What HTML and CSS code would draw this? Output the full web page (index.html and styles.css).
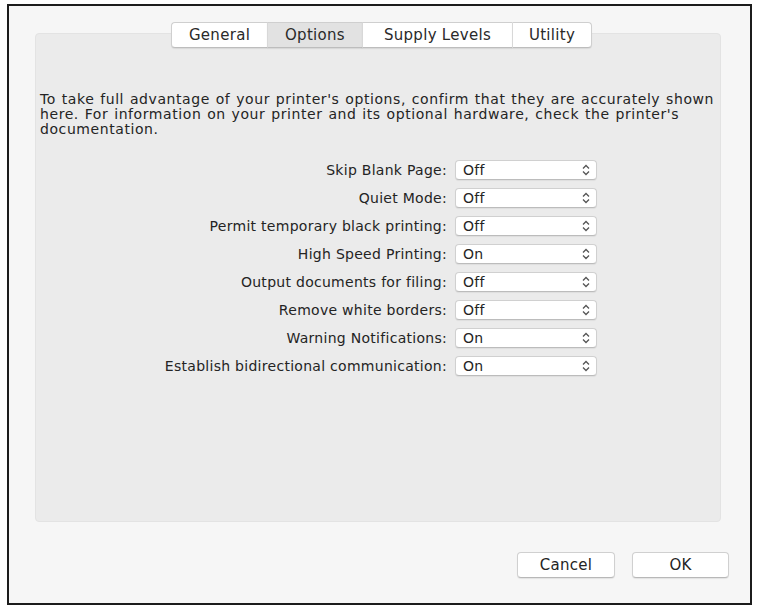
FILE: index.html
```html
<!DOCTYPE html>
<html lang="en">

<head>
    <meta charset="UTF-8">
    <title>Printer Options</title>
    <link rel="stylesheet" href="styles.css">
</head>

<body>
    <div class="window">
        <div class="tabs">
            <span class="tab tab-general">General</span>
            <span class="tab tab-options active">Options</span>
            <span class="tab tab-supply">Supply Levels</span>
            <span class="tab tab-utility">Utility</span>
        </div>

        <div class="panel">
            <p class="intro">To take full advantage of your printer's options, confirm that they are accurately shown<br>
                here. For information on your printer and its optional hardware, check the printer's<br>
                documentation.</p>

            <div class="form">
                <label>Skip Blank Page:</label>
                <div class="select"><span>Off</span><svg width="8" height="12" viewBox="0 0 8 12"><path d="M1 4.5 4 1.5 7 4.5M1 7.5 4 10.5 7 7.5" /></svg></div>

                <label>Quiet Mode:</label>
                <div class="select"><span>Off</span><svg width="8" height="12" viewBox="0 0 8 12"><path d="M1 4.5 4 1.5 7 4.5M1 7.5 4 10.5 7 7.5" /></svg></div>

                <label>Permit temporary black printing:</label>
                <div class="select"><span>Off</span><svg width="8" height="12" viewBox="0 0 8 12"><path d="M1 4.5 4 1.5 7 4.5M1 7.5 4 10.5 7 7.5" /></svg></div>

                <label>High Speed Printing:</label>
                <div class="select"><span>On</span><svg width="8" height="12" viewBox="0 0 8 12"><path d="M1 4.5 4 1.5 7 4.5M1 7.5 4 10.5 7 7.5" /></svg></div>

                <label>Output documents for filing:</label>
                <div class="select"><span>Off</span><svg width="8" height="12" viewBox="0 0 8 12"><path d="M1 4.5 4 1.5 7 4.5M1 7.5 4 10.5 7 7.5" /></svg></div>

                <label>Remove white borders:</label>
                <div class="select"><span>Off</span><svg width="8" height="12" viewBox="0 0 8 12"><path d="M1 4.5 4 1.5 7 4.5M1 7.5 4 10.5 7 7.5" /></svg></div>

                <label>Warning Notifications:</label>
                <div class="select"><span>On</span><svg width="8" height="12" viewBox="0 0 8 12"><path d="M1 4.5 4 1.5 7 4.5M1 7.5 4 10.5 7 7.5" /></svg></div>

                <label>Establish bidirectional communication:</label>
                <div class="select"><span>On</span><svg width="8" height="12" viewBox="0 0 8 12"><path d="M1 4.5 4 1.5 7 4.5M1 7.5 4 10.5 7 7.5" /></svg></div>
            </div>
        </div>

        <div class="buttons">
            <button class="btn btn-cancel">Cancel</button>
            <button class="btn btn-ok">OK</button>
        </div>
    </div>
</body>

</html>
```

FILE: styles.css
```css
* {
    padding: 0;
    margin: 0;
    box-sizing: border-box;
}

body {
    background: #fff;
    font-family: "DejaVu Sans", "Liberation Sans", sans-serif;
    color: #242424;
}

.window {
    width: 745px;
    height: 601px;
    margin: 4px 0 0 7px;
    border: 2px solid #1c1c1c;
    background: #f6f6f6;
    padding-top: 16px;
    display: flex;
    flex-direction: column;
}

/* tab strip sits half over the panel */
.tabs {
    display: flex;
    justify-content: center;
    height: 26px;
    margin: 0 0 -15px 4px;
    position: relative;
    z-index: 1;
}

.tab {
    display: flex;
    align-items: center;
    justify-content: center;
    height: 26px;
    font-size: 15px;
    letter-spacing: 0.3px;
    color: #2a2a2a;
    background: #fff;
    border-top: 1px solid #cfcfcf;
    border-bottom: 1px solid #bdbdbd;
    border-left: 1px solid #d8d8d8;
    box-shadow: 0 1px 1px rgba(0, 0, 0, 0.08);
}

.tab-general {
    width: 96px;
    border-left: 1px solid #cfcfcf;
    border-radius: 4px 0 0 4px;
}

.tab-options {
    width: 95px;
}

.tab-supply {
    width: 150px;
}

.tab-utility {
    width: 80px;
    border-right: 1px solid #cfcfcf;
    border-radius: 0 4px 4px 0;
}

.tab.active {
    background: #e2e2e2;
}

.panel {
    height: 489px;
    margin: 0 29px 0 26px;
    background: #ebebeb;
    border: 1px solid #e3e3e3;
    border-radius: 4px;
    padding: 58px 0 0 4px;
}

.intro {
    font-size: 14px;
    letter-spacing: 0.58px;
    word-spacing: 0.8px;
    line-height: 15px;
    white-space: nowrap;
}

.form {
    display: grid;
    grid-template-columns: 407px 142px;
    column-gap: 8px;
    row-gap: 8px;
    margin-top: 23px;
}

.form label {
    height: 20px;
    line-height: 20px;
    text-align: right;
    font-size: 14px;
    letter-spacing: 0.28px;
}

.select {
    height: 20px;
    display: flex;
    align-items: center;
    justify-content: space-between;
    padding: 0 6px 0 7px;
    background: #fff;
    border: 1px solid #d0d0d0;
    border-bottom-color: #bcbcbc;
    border-radius: 4px;
    box-shadow: 0 1px 1px rgba(0, 0, 0, 0.06);
    font-size: 14px;
    letter-spacing: 0.25px;
}

.select svg path {
    fill: none;
    stroke: #555;
    stroke-width: 1.3;
}

.buttons {
    display: flex;
    justify-content: flex-end;
    gap: 17px;
    padding: 30px 21px 0 0;
}

.btn {
    height: 26px;
    background: #fff;
    border: 1px solid #d0d0d0;
    border-bottom-color: #b8b8b8;
    border-radius: 4px;
    box-shadow: 0 1px 1px rgba(0, 0, 0, 0.08);
    font-family: "DejaVu Sans", "Liberation Sans", sans-serif;
    font-size: 15px;
    letter-spacing: 0.3px;
    color: #242424;
}

.btn-cancel {
    width: 98px;
}

.btn-ok {
    width: 97px;
}
```
